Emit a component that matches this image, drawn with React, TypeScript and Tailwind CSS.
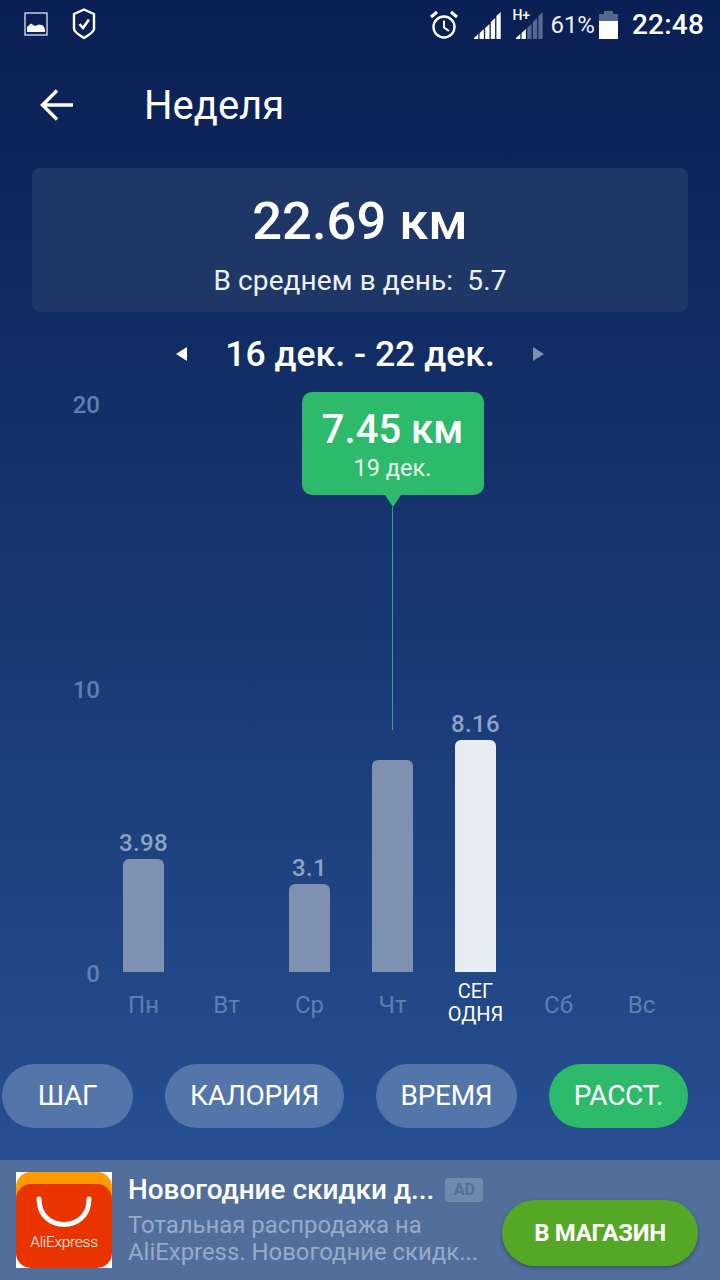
const font = { fontFamily: "Roboto, 'Noto Sans', sans-serif" };

function Bar({ value, h, today }: { value: string; h: number; today?: boolean }) {
  return (
    <>
      <span className="text-[24px] leading-[28px] mb-[2px] font-medium tracking-[0.3px] text-[#8ea2c6]">{value}</span>
      <div
        className={today ? "w-[41px] rounded-t-[6px] bg-[#e8edf4]" : "w-[41px] rounded-t-[6px] bg-[#7f91b0]"}
        style={{ height: h }}
      />
    </>
  );
}

function Day({ label, today }: { label: string; today?: boolean }) {
  return (
    <div
      className={
        today
          ? "w-[83px] shrink-0 text-center text-[20px] leading-[23px] pt-[7px] text-white"
          : "w-[83px] shrink-0 text-center text-[24px] leading-[28px] pt-[18px] text-[#5f7fb2]"
      }
    >
      {label}
    </div>
  );
}

function Tab({ label, w, active }: { label: string; w: string; active?: boolean }) {
  return (
    <div
      className={`${w} h-[64px] rounded-[32px] flex items-center justify-center text-[28px] text-white tracking-[-0.3px] ${
        active ? "bg-[#2dbb6b]" : "bg-[#5475aa]"
      }`}
    >
      {label}
    </div>
  );
}

function Signal({ lit }: { lit: number }) {
  const heights = [5, 10, 15, 21, 27];
  return (
    <svg width="28" height="28" viewBox="0 0 28 28">
      {heights.map((h, i) => (
        <path
          key={i}
          d={`M${i * 5.6} 28 V${28 - (h - 4)} L${i * 5.6 + 4.3} ${28 - h} V28 Z`}
          fill={i < lit ? "#fff" : "#56698f"}
        />
      ))}
    </svg>
  );
}

export default function App() {
  return (
    <div
      style={font}
      className="w-[720px] h-[1280px] overflow-hidden flex flex-col text-white bg-gradient-to-b from-[#0a1f53] to-[#2a5498]"
    >
      {/* status bar */}
      <div className="h-[50px] shrink-0 flex items-center pl-[24px] pr-[16px]">
        <svg width="24" height="24" viewBox="0 0 24 24" className="mb-[3px]">
          <rect x="1" y="1" width="22" height="22" fill="none" stroke="#c3cde0" strokeWidth="1.5" />
          <path d="M3 20 V15 L7 11.5 L11 14 L15 12.5 L19 13.5 L21 17 V20 Z" fill="#fff" />
        </svg>
        <svg width="24" height="32" viewBox="0 0 24 32" className="ml-[24px] mb-[2px]">
          <path d="M12 1.5 L22 6 V21 Q22 24 12 30 Q2 24 2 21 V6 Z" fill="none" stroke="#fff" strokeWidth="2.4" strokeLinejoin="round" />
          <path d="M7.5 16 L11 20 L17 11.5" fill="none" stroke="#fff" strokeWidth="2.6" />
        </svg>
        <div className="flex-1" />
        <svg width="30" height="30" viewBox="0 0 30 30" className="mb-[1px]">
          <circle cx="15" cy="17" r="10.5" fill="none" stroke="#fff" strokeWidth="2.4" />
          <path d="M15 10.5 V17.5 L20 21" fill="none" stroke="#fff" strokeWidth="2" />
          <path d="M2 7 L8 2 M28 7 L22 2" stroke="#fff" strokeWidth="3" />
        </svg>
        <div className="ml-[15px] mb-[1px]"><Signal lit={5} /></div>
        <div className="relative ml-[14px] mb-[1px] w-[28px] h-[28px]">
          <Signal lit={2} />
          <span className="absolute -left-[4px] -top-[3px] text-[14px] leading-[14px] font-medium">H+</span>
        </div>
        <span className="ml-[6px] text-[24px] text-[#eef1f7]">61%</span>
        <div className="ml-[4px] w-[19px] h-[28px] flex flex-col items-center">
          <div className="w-[9px] h-[3px] bg-[#56698f]" />
          <div className="w-[19px] h-[7px] bg-[#56698f]" />
          <div className="w-[19px] h-[18px] bg-white" />
        </div>
        <span className="ml-[14px] text-[28px] font-medium tracking-[0.2px]">22:48</span>
      </div>

      {/* header */}
      <div className="h-[112px] shrink-0 flex items-center pl-[40px]">
        <svg width="34" height="34" viewBox="0 0 34 34" className="mb-[2px]">
          <path d="M33 17 H3 M17 2.5 L2.5 17 L17 31.5" fill="none" stroke="#fff" strokeWidth="3.4" />
        </svg>
        <span className="ml-[70px] text-[40px] leading-[46px]">Неделя</span>
      </div>

      {/* summary */}
      <div className="mx-[32px] h-[144px] mt-[6px] shrink-0 rounded-[8px] bg-[#1f3767] flex flex-col items-center">
        <span className="mt-[21px] text-[52.5px] leading-[64px] font-medium">22.69 км</span>
        <span className="mt-[11px] text-[28px] leading-[34px] text-[#eef1f7] whitespace-pre tracking-[0.1px]">В среднем в день:  5.7</span>
      </div>

      {/* date */}
      <div className="h-[46px] mt-[19px] shrink-0 flex items-center justify-center">
        <div className="w-0 h-0 border-y-[7px] border-y-transparent border-r-[11px] border-r-white" />
        <span className="mx-[38px] text-[35.6px] leading-[40px] font-medium">16 дек. - 22 дек.</span>
        <div className="w-0 h-0 border-y-[7px] border-y-transparent border-l-[11px] border-l-[#7d8fb0]" />
      </div>

      {/* chart */}
      <div className="flex h-[583px] mt-[12px] shrink-0">
        <div className="w-[102px] shrink-0 pr-[2px] mt-[4px] h-[593px] flex flex-col justify-between items-end text-[24px] leading-[24px] font-medium text-[#5f7fb2]">
          <span>20</span>
          <span>10</span>
          <span>0</span>
        </div>
        <div className="flex flex-col flex-1">
          <div className="flex h-[583px] items-end">
            <div className="w-[83px] flex flex-col items-center justify-end"><Bar value="3.98" h={113} /></div>
            <div className="w-[83px]" />
            <div className="w-[83px] flex flex-col items-center justify-end"><Bar value="3.1" h={88} /></div>
            <div className="w-[83px] flex flex-col items-center justify-end">
              <div className="shrink-0 w-[182px] h-[103px] rounded-[10px] bg-[#2dbb6b] flex flex-col items-center">
                <span className="mt-[14px] text-[40px] leading-[48px] font-medium">7.45 км</span>
                <span className="mt-[1px] text-[23.6px] leading-[27px] text-[#e6f7ed]">19 дек.</span>
              </div>
              <div className="w-0 h-0 border-x-[8px] border-x-transparent border-t-[12px] border-t-[#2dbb6b]" />
              <div className="w-px h-[223px] bg-[#2fa78c]" />
              <div className="w-[41px] h-[212px] mt-[30px] rounded-t-[6px] bg-[#7f91b0]" />
            </div>
            <div className="w-[83px] flex flex-col items-center justify-end"><Bar value="8.16" h={232} today /></div>
          </div>
        </div>
      </div>
      <div className="flex ml-[102px] mr-[37px] h-[81px] shrink-0 border-t border-t-[#244a86]">
        <Day label="Пн" />
        <Day label="Вт" />
        <Day label="Ср" />
        <Day label="Чт" />
        <Day label={"СЕГ ОДНЯ"} today />
        <Day label="Сб" />
        <Day label="Вс" />
      </div>

      {/* tabs */}
      <div className="h-[64px] shrink-0 mt-[11px] pl-[2px] flex gap-[32px]">
        <Tab label="ШАГ" w="w-[131px]" />
        <Tab label="КАЛОРИЯ" w="w-[179px]" />
        <Tab label="ВРЕМЯ" w="w-[141px]" />
        <Tab label="РАССТ." w="w-[139px]" active />
      </div>

      {/* ad */}
      <div className="mt-[32px] h-[120px] shrink-0 bg-[#526f9b] flex items-center pl-[16px]">
        <div className="w-[96px] h-[96px] shrink-0 bg-white">
          <svg width="96" height="96" viewBox="0 0 96 96">
            <rect width="96" height="60" rx="15" fill="#ff9a00" />
            <rect y="12" width="96" height="84" rx="15" fill="#e93400" />
            <path d="M23 27 C23 61 73 61 73 27" fill="none" stroke="#fff" strokeWidth="5" strokeLinecap="round" />
            <text x="48" y="75" textAnchor="middle" fontSize="15.5" letterSpacing="-0.3" fontWeight="300" fill="#fff" fontFamily="Roboto, sans-serif">AliExpress</text>
          </svg>
        </div>
        <div className="ml-[16px] w-[374px] shrink-0 flex flex-col">
          <div className="flex items-center h-[34px] -mt-[1px]">
            <span className="text-[27.9px] leading-[34px] font-medium whitespace-nowrap">Новогодние скидки д...</span>
            <span className="ml-[11px] w-[38px] h-[24px] rounded-[3px] bg-[#6d8bab] flex items-center justify-center text-[16px] font-bold text-[#527299]">AD</span>
          </div>
          <div className="mt-[5px] text-[23.9px] leading-[27px] text-[#98aac8] whitespace-nowrap">
            <div>Тотальная распродажа на</div>
            <div>AliExpress. Новогодние скидк...</div>
          </div>
        </div>
        <div className="mt-[26px] w-[196px] h-[66px] rounded-[33px] bg-[#55a826] shadow-[0_2px_4px_rgba(0,0,0,0.3)] flex items-center justify-center text-[24px] font-bold tracking-[-0.3px]">
          В МАГАЗИН
        </div>
      </div>
    </div>
  );
}
